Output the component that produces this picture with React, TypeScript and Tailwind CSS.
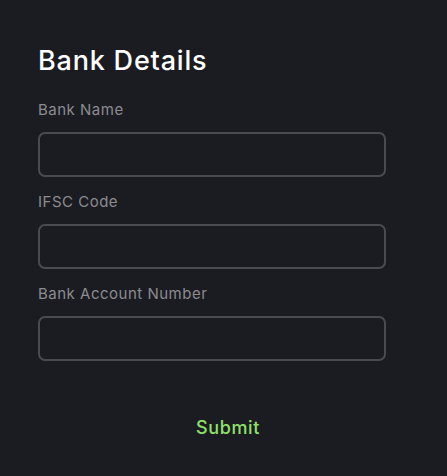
import React from 'react';

const fields = ['Bank Name', 'IFSC Code', 'Bank Account Number'];

const App = () => {
  return (
    <div
      className="min-h-[476px] w-full bg-[#1b1c21] pt-[44px] pl-[38px]"
      style={{ fontFamily: 'Inter, "Noto Sans", sans-serif' }}
    >
      <h1 className="text-[27px] leading-[34px] font-medium tracking-[0.8px] text-white">Bank Details</h1>
      <form className="mt-[22px] flex flex-col gap-[15px]" onSubmit={(e) => e.preventDefault()}>
        {fields.map((label) => (
          <div key={label} className="flex flex-col">
            <label className="text-[15px] leading-[20px] tracking-[0.5px] text-[#8b8b90] mb-[12px]">{label}</label>
            <input
              type="text"
              className="h-[45px] w-[348px] rounded-[7px] border-2 border-[#4a4b50] bg-transparent px-3 text-white outline-none"
            />
          </div>
        ))}
        <div className="mt-[40px] flex w-[380px] justify-center">
          <button type="submit" className="text-[18px] leading-[24px] font-medium tracking-[0.6px] text-[#8fe06b]">
            Submit
          </button>
        </div>
      </form>
    </div>
  );
};

export default App;
